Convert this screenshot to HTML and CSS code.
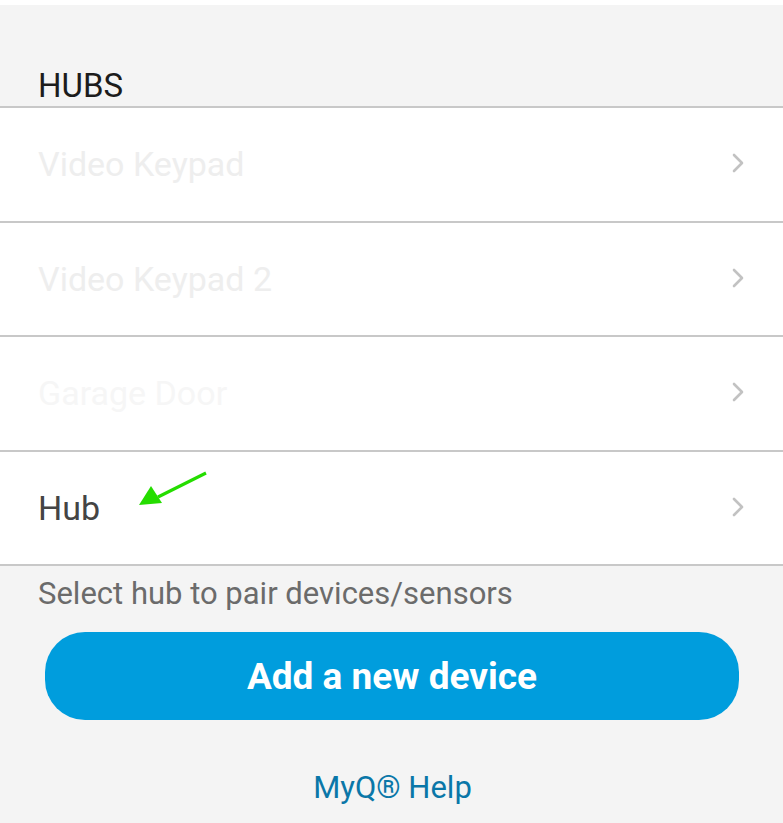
FILE: index.html
```html
<!DOCTYPE html>
<html lang="en">
<head>
<meta charset="utf-8">
<title>Hubs</title>
<link rel="stylesheet" href="styles.css">
</head>
<body>
<div class="screen">
  <div class="section-title">HUBS</div>
  <ul class="list">
    <li class="row faded"><span class="label">Video Keypad</span><svg class="chev" viewBox="0 0 14 20"><path d="M3 2 L11 10 L3 18" /></svg></li>
    <li class="row faded"><span class="label">Video Keypad 2</span><svg class="chev" viewBox="0 0 14 20"><path d="M3 2 L11 10 L3 18" /></svg></li>
    <li class="row faded2"><span class="label">Garage Door</span><svg class="chev" viewBox="0 0 14 20"><path d="M3 2 L11 10 L3 18" /></svg></li>
    <li class="row active"><span class="label">Hub</span>
      <svg class="annot" viewBox="0 0 80 40"><line x1="70" y1="3" x2="22" y2="27" /><polygon points="3,35 15,16 26,33" /></svg>
      <svg class="chev" viewBox="0 0 14 20"><path d="M3 2 L11 10 L3 18" /></svg></li>
  </ul>
  <p class="hint">Select hub to pair devices/sensors</p>
  <div class="btn-wrap"><button class="btn">Add a new device</button></div>
  <a class="help">MyQ® Help</a>
</div>
</body>
</html>
```
FILE: styles.css
```css
html, body { margin: 0; padding: 0; background: #ffffff; }
body { font-family: Roboto, "Noto Sans", sans-serif; }
.screen {
  margin-top: 5px;
  height: 818px;
  background: #f4f4f4;
  display: flex;
  flex-direction: column;
}
.section-title {
  height: 101px;
  box-sizing: border-box;
  padding: 0 0 4px 38px;
  display: flex;
  align-items: flex-end;
  font-size: 33px;
  color: #1c1c1c;
  line-height: 1;
}
.list {
  list-style: none;
  margin: 0;
  padding: 0;
  border-top: 2px solid #c8c8c8;
}
.row {
  position: relative;
  box-sizing: border-box;
  border-bottom: 2px solid #c8c8c8;
  height: 114.6px;
  background: #ffffff;
  display: flex;
  align-items: center;
  padding: 0 38px;
  font-size: 34px;
}
.label { flex: 1; }
.faded .label { color: #eeeeee; }
.faded2 .label { color: #f6f6f6; }
.active .label { color: #444444; }
.chev {
  width: 14px;
  height: 20px;
  margin-top: -2px;
}
.chev path {
  fill: none;
  stroke: #c2c2c2;
  stroke-width: 2.6;
  stroke-linecap: round;
  stroke-linejoin: round;
}
.annot {
  position: absolute;
  left: 136px;
  top: 18px;
  width: 80px;
  height: 40px;
}
.annot line { stroke: #25dd00; stroke-width: 3.2; }
.annot polygon { fill: #25dd00; }
.hint {
  margin: 10px 0 0 38px;
  font-size: 31px;
  color: #6b6b6b;
  line-height: 36px;
}
.btn-wrap { padding: 20px 44px 0 45px; }
.btn {
  width: 100%;
  height: 88px;
  border: none;
  border-radius: 40px;
  background: #009ddd;
  color: #ffffff;
  font-family: Roboto, "Noto Sans", sans-serif;
  font-weight: 700;
  font-size: 37px;
}
.help {
  margin-top: 50px;
  align-self: center;
  padding-left: 2px;
  font-size: 31px;
  color: #0a77a8;
  line-height: 36px;
}
```
